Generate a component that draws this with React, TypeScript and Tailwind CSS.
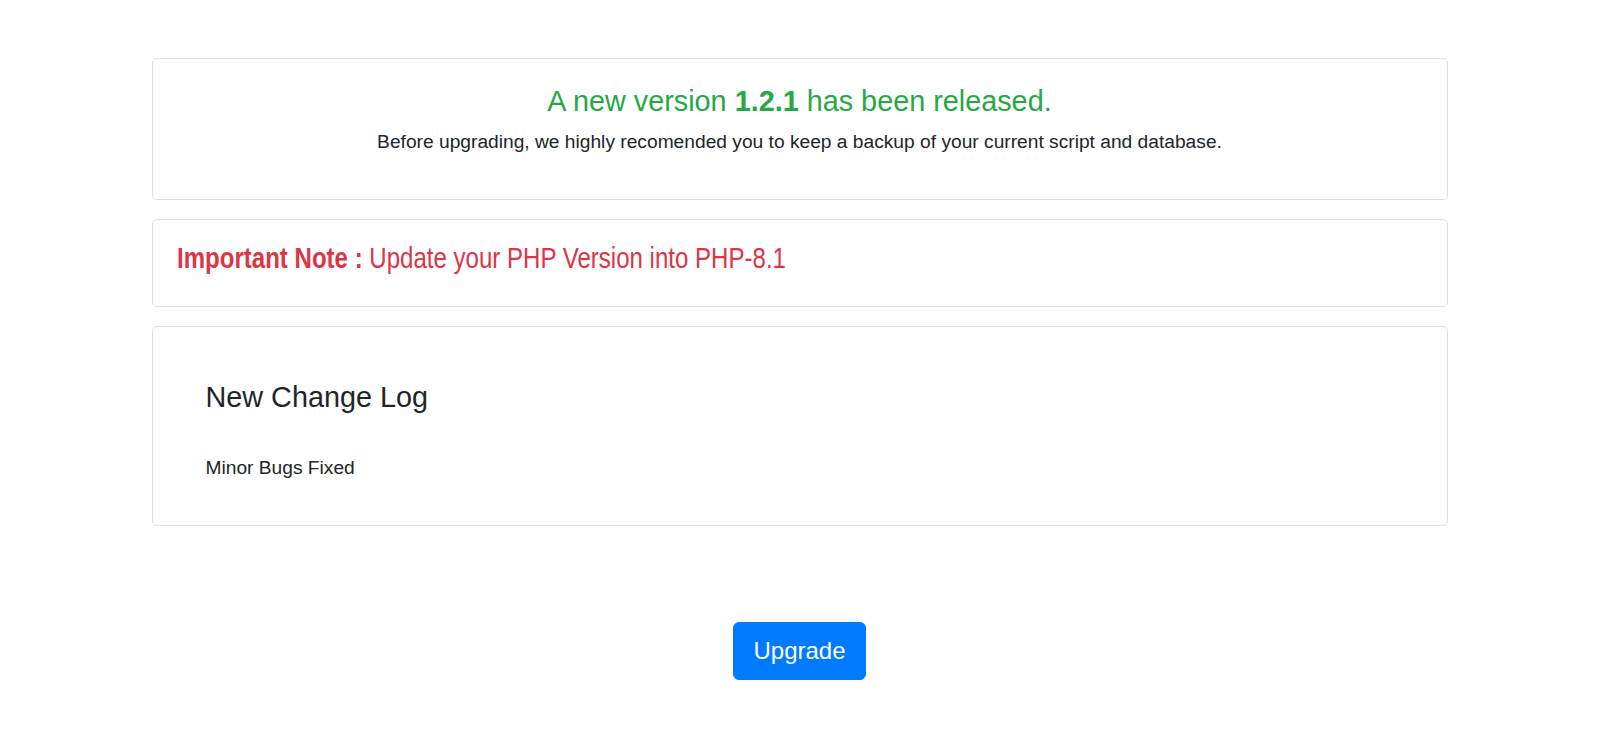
import React from 'react';

const Card = ({ className, children }: { className?: string; children: React.ReactNode }) => (
  <div className={`border border-[#dfdfdf] rounded-[5px] bg-white ${className ?? ''}`}>{children}</div>
);

export default function App() {
  return (
    <div className="min-h-screen bg-white text-[#212529] font-['Liberation_Sans',Arial,sans-serif]">
      <div className="w-[1296px] mx-auto pt-[58px]">
        {/* Release banner */}
        <Card className="px-6 pt-[25px] pb-6 text-center">
          <h4 className="text-[28.8px] leading-[34.56px] text-[#28a745] mb-[9.6px]">
            A new version <b>1.2.1</b> has been released.
          </h4>
          <p className="text-[19.2px] leading-[28.8px] mb-[18.2px]">
            Before upgrading, we highly recomended you to keep a backup of your current script and database.
          </p>
        </Card>

        {/* Note */}
        <Card className="mt-[19px] px-6 pt-[21px] pb-[31px]">
          <h4 className="text-[28.8px] leading-[34px] text-[#dc3545] whitespace-nowrap inline-block origin-left scale-x-[0.835]">
            <b>Important Note :</b> Update your PHP Version into PHP-8.1
          </h4>
        </Card>

        {/* Change log */}
        <Card className="mt-[19px] px-6 pt-6 pb-6">
          <div className="px-[29px] pt-[29px]">
            <h4 className="text-[28.8px] leading-[34.56px] mb-[39px]">New Change Log</h4>
            <p className="text-[19.2px] leading-[28.8px] mb-[18px]">Minor Bugs Fixed</p>
          </div>
        </Card>

        <div className="flex justify-center mt-[96px]">
          <button className="bg-[#007bff] text-white text-[24px] leading-[36px] px-[19.2px] py-[10px] rounded-[6px] border border-[#007bff]">
            Upgrade
          </button>
        </div>
      </div>
    </div>
  );
}
